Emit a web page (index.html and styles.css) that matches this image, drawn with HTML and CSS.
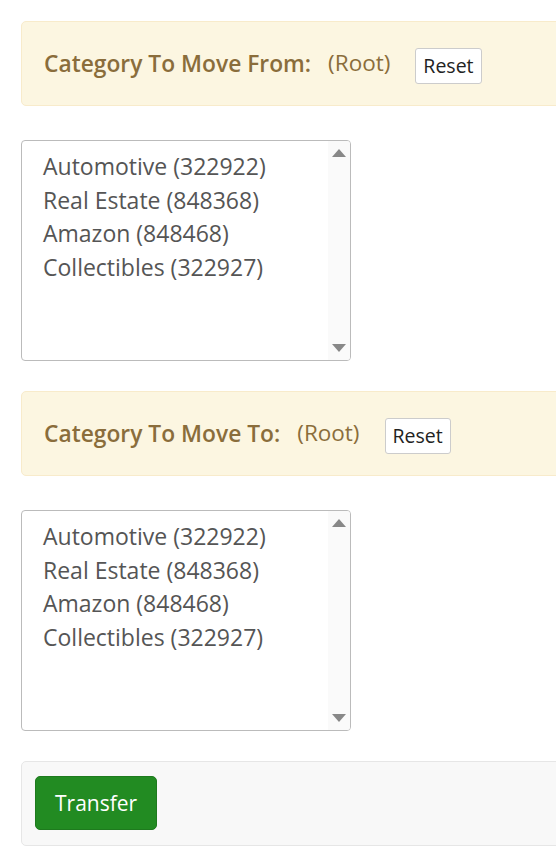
FILE: index.html
```html
<!DOCTYPE html>
<html lang="en">
<head>
  <meta charset="UTF-8">
  <title>Move Category</title>
  <link rel="stylesheet" href="styles.css">
</head>
<body>

  <div class="page">
    <div class="panel panel-warning">
      <span class="panel-label">Category To Move From:</span>
      <span class="panel-value">(Root)</span>
      <button class="btn-reset">Reset</button>
    </div>

    <div class="listbox">
      <ul class="listbox-items">
        <li>Automotive (322922)</li>
        <li>Real Estate (848368)</li>
        <li>Amazon (848468)</li>
        <li>Collectibles (322927)</li>
      </ul>
      <div class="scrollbar">
        <span class="arrow-up"></span>
        <span class="arrow-down"></span>
      </div>
    </div>

    <div class="panel panel-warning">
      <span class="panel-label">Category To Move To:</span>
      <span class="panel-value">(Root)</span>
      <button class="btn-reset">Reset</button>
    </div>

    <div class="listbox">
      <ul class="listbox-items">
        <li>Automotive (322922)</li>
        <li>Real Estate (848368)</li>
        <li>Amazon (848468)</li>
        <li>Collectibles (322927)</li>
      </ul>
      <div class="scrollbar">
        <span class="arrow-up"></span>
        <span class="arrow-down"></span>
      </div>
    </div>

    <div class="panel panel-footer">
      <button class="btn-transfer">Transfer</button>
    </div>
  </div>

</body>
</html>
```

FILE: styles.css
```css
html, body {
  margin: 0;
  overflow: hidden;
  background: #fff;
  font-family: "Open Sans", "Noto Sans", sans-serif;
  color: #555;
}

.page {
  padding: 21px 0 0 21px;
  width: 620px;
}

.panel {
  display: flex;
  align-items: center;
  height: 85px;
  box-sizing: border-box;
  padding: 0 22px;
  border-radius: 5px;
  margin-bottom: 34px;
}

.panel-warning {
  background-color: #fcf6e1;
  border: 1px solid #f8ebcb;
  color: #8a6d3b;
}

.panel-label {
  font-weight: 600;
  font-size: 22.8px;
}

.panel-value {
  font-size: 22.5px;
  margin-left: 17px;
  margin-top: -2px;
}

.btn-reset {
  margin-left: 25px;
  margin-top: 4px;
  height: 36px;
  padding: 0 7px;
  background: #fff;
  border: 1px solid #ccc;
  border-radius: 3px;
  font-family: inherit;
  font-size: 19.5px;
  color: #222;
}

.listbox {
  display: flex;
  width: 330px;
  height: 221px;
  box-sizing: border-box;
  border: 1px solid #bbb;
  border-radius: 4px;
  margin-bottom: 30px;
  overflow: hidden;
}

.listbox-items {
  flex: 1;
  list-style: none;
  margin: 0;
  padding: 9px 0 0 21px;
  font-size: 23px;
  line-height: 33.5px;
  color: #555;
}

.scrollbar {
  width: 22px;
  background: #fafafa;
  display: flex;
  flex-direction: column;
  justify-content: space-between;
  align-items: center;
  padding: 8px 0;
}

.arrow-up {
  width: 0;
  height: 0;
  border-left: 7px solid transparent;
  border-right: 7px solid transparent;
  border-bottom: 8px solid #888;
}

.arrow-down {
  width: 0;
  height: 0;
  border-left: 7px solid transparent;
  border-right: 7px solid transparent;
  border-top: 8px solid #888;
}

.panel-footer {
  background-color: #f8f8f8;
  border: 1px solid #e6e6e6;
  padding: 0 13px;
}

.btn-transfer {
  height: 54px;
  padding: 0 19px;
  background-color: #228b22;
  border: 1px solid #1e7a1e;
  border-radius: 5px;
  color: #fff;
  font-family: inherit;
  font-size: 21px;
  margin-top: -1px;
}
```
